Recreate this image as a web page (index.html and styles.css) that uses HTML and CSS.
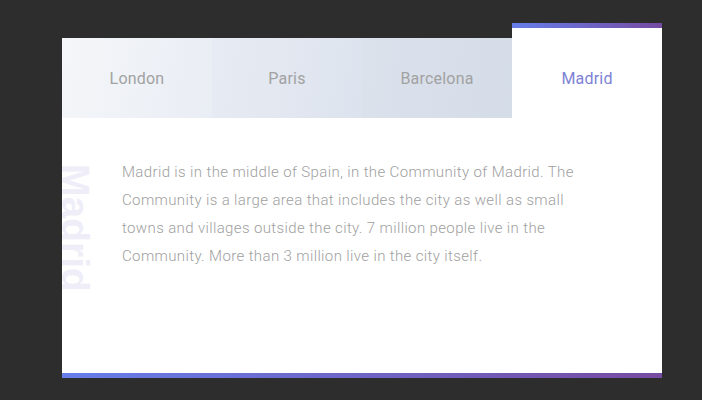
FILE: index.html
```html
<!DOCTYPE html>
<html lang="en">
<head>
<meta charset="utf-8">
<title>Cities</title>
<link rel="stylesheet" href="styles.css">
</head>
<body>
<div class="card">
  <div class="tabs">
    <div class="tab tab-1">London</div>
    <div class="tab tab-2">Paris</div>
    <div class="tab tab-3">Barcelona</div>
    <div class="tab active">Madrid</div>
  </div>
  <div class="content">
    <h2 class="side-title">Madrid</h2>
    <p class="text">Madrid is in the middle of Spain, in the Community of Madrid. The Community is a large area that includes the city as well as small towns and villages outside the city. 7 million people live in the Community. More than 3 million live in the city itself.</p>
  </div>
</div>
</body>
</html>
```

FILE: styles.css
```css
html, body {
  margin: 0;
  padding: 0;
}
body {
  background: #2d2d2d;
  width: 702px;
  height: 400px;
  padding-top: 38px;
  box-sizing: border-box;
  font-family: Roboto, "Liberation Sans", sans-serif;
}
.card {
  margin-left: 62px;
  width: 600px;
  background: #ffffff;
  border-bottom: 5px solid transparent;
  border-image: linear-gradient(90deg, #667eea, #764ba2) 1;
}
.tabs {
  display: flex;
  height: 80px;
}
.tab {
  flex: 0 0 150px;
  display: flex;
  align-items: center;
  justify-content: center;
  font-size: 16px;
  letter-spacing: 0.2px;
  color: #a2a2a2;
  position: relative;
}
.tab-1 { background: linear-gradient(100deg, #f4f6f9 0%, #e9edf4 100%); }
.tab-2 { background: linear-gradient(100deg, #e7ebf3 0%, #dde3ee 100%); }
.tab-3 { background: linear-gradient(100deg, #dce2ec 0%, #d4dce8 100%); }
.tab.active {
  background: #ffffff;
  color: #7d82d4;
}
.tab.active::before {
  content: "";
  position: absolute;
  left: 0;
  right: 0;
  top: -15px;
  height: 15px;
  background: linear-gradient(#fff, #fff) 0 5px / 100% 10px no-repeat,
              linear-gradient(90deg, #667eea, #764ba2);
}
.content {
  display: flex;
  align-items: flex-start;
  height: 255px;
  overflow: hidden;
}
.side-title {
  margin: 46px 0 0 -7px;
  writing-mode: vertical-rl;
  font-family: "Liberation Sans", Arial, sans-serif;
  font-weight: 700;
  font-size: 39px;
  line-height: 40px;
  width: 40px;
  color: #eeedf8;
}
.text {
  margin: 40px 0 0 27px;
  width: 470px;
  font-size: 15px;
  font-weight: 300;
  letter-spacing: 0.37px;
  line-height: 28px;
  color: #a0a0a0;
}
```
